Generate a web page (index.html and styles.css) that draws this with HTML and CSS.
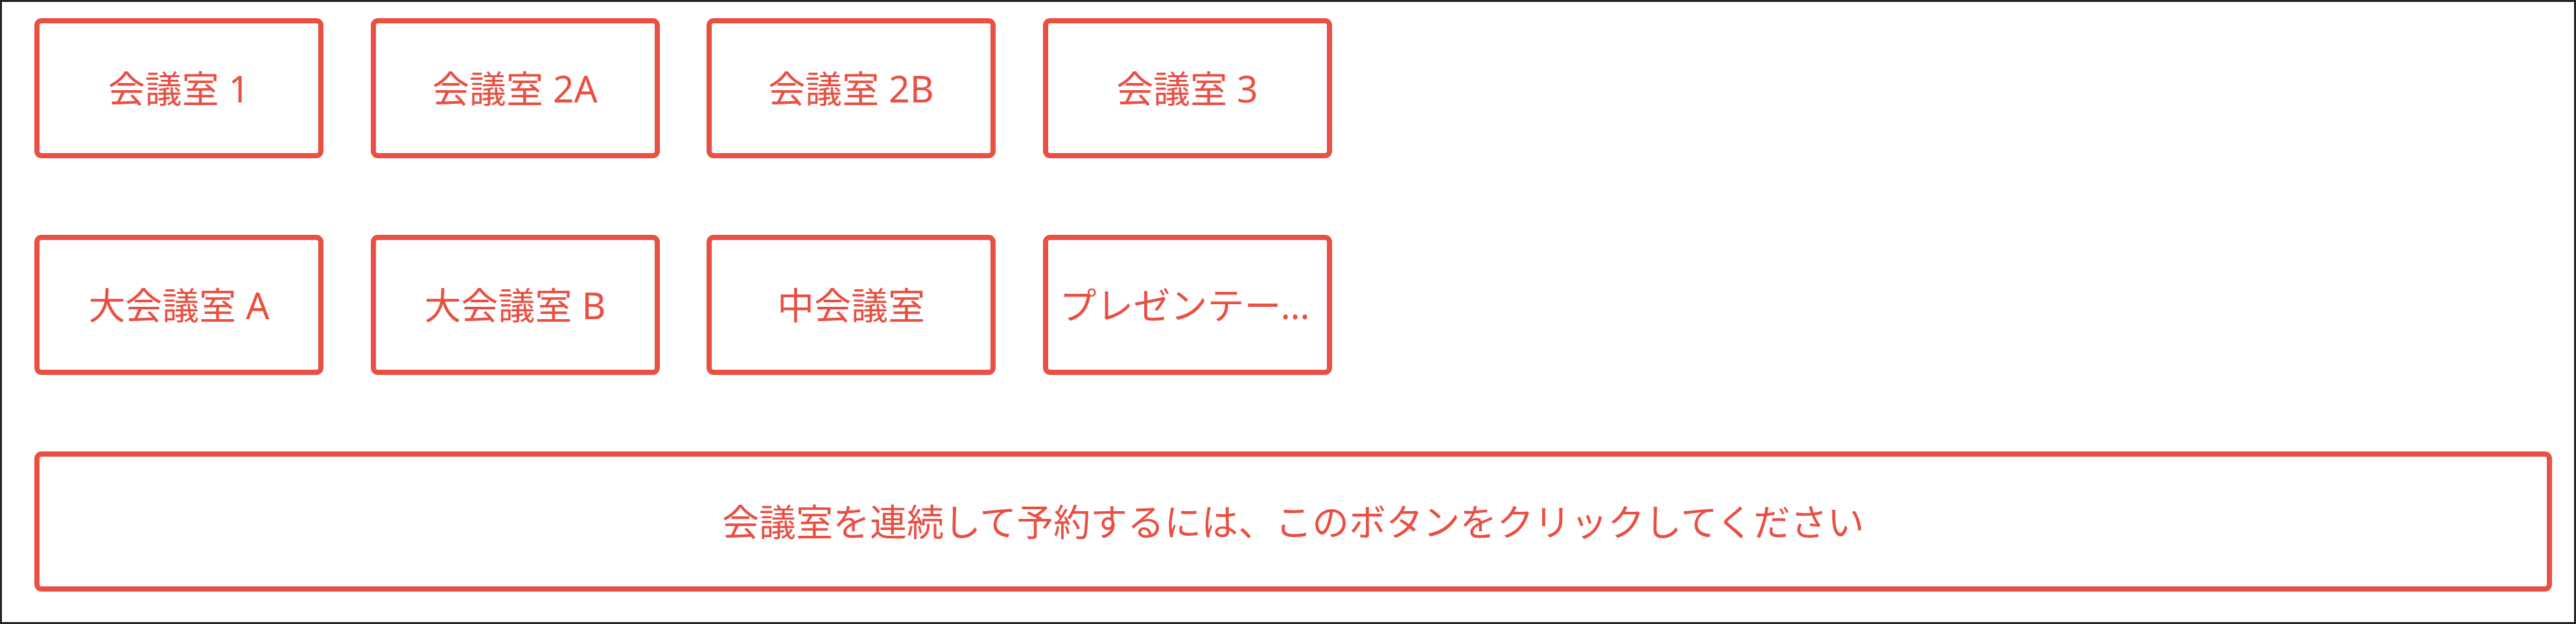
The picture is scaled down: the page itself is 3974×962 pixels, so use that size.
FILE: index.html
```html
<!DOCTYPE html>
<html lang="ja">
<head>
<meta charset="utf-8">
<title>会議室予約</title>
<link rel="stylesheet" href="styles.css">
</head>
<body>
<div class="frame">
  <div class="rooms">
    <button class="room">会議室 1</button>
    <button class="room">会議室 2A</button>
    <button class="room">会議室 2B</button>
    <button class="room">会議室 3</button>
    <button class="room">大会議室 A</button>
    <button class="room">大会議室 B</button>
    <button class="room">中会議室</button>
    <button class="room">プレゼンテーションルーム</button>
  </div>
  <button class="serial">会議室を連続して予約するには、このボタンをクリックしてください</button>
</div>
</body>
</html>
```
FILE: styles.css
```css
html, body {
  margin: 0;
  padding: 0;
  background: #ffffff;
}

.frame {
  box-sizing: border-box;
  width: 3974px;
  height: 962px;
  border: 3px solid #222222;
  padding: 25px 34px 46px 50px;
  display: flex;
  flex-direction: column;
  gap: 118px;
  font-family: "Noto Sans", "Noto Sans CJK JP", sans-serif;
}

.rooms {
  display: grid;
  grid-template-columns: repeat(4, 446px);
  grid-auto-rows: 216px;
  column-gap: 72.5px;
  row-gap: 118px;
}

.room,
.serial {
  box-sizing: border-box;
  margin: 0;
  background: #ffffff;
  border: 8px solid #e94f42;
  border-radius: 11px;
  color: #e94f42;
  font-family: "Noto Sans", "Noto Sans CJK JP", sans-serif;
  font-size: 57px;
  font-weight: 400;
  line-height: 1.2;
  text-align: center;
  cursor: pointer;
}

.room {
  width: 446px;
  height: 216px;
  padding: 0 18px;
  white-space: nowrap;
  overflow: hidden;
  text-overflow: ellipsis;
}

.serial {
  width: 3884px;
  height: 216px;
  padding: 0 18px;
}
```
